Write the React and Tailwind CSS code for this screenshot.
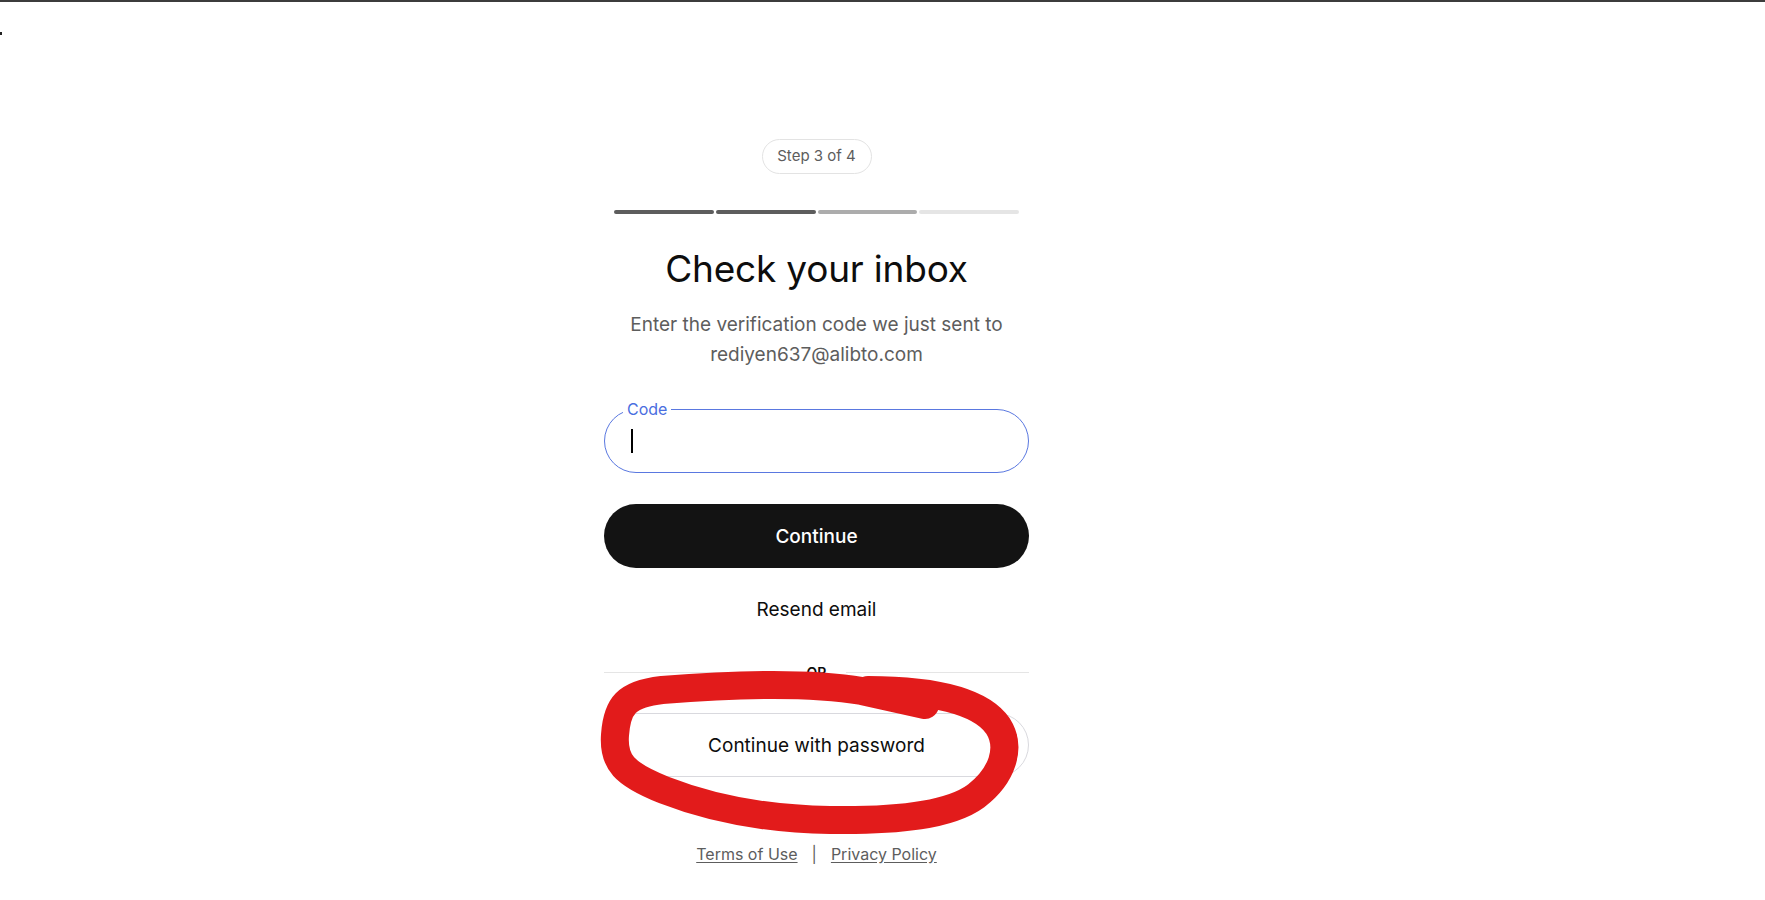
import React from "react";

const font = "font-['Inter','Noto_Sans',sans-serif]";

function StepPill() {
  return (
    <div className="flex justify-center">
      <div className="inline-flex h-[35px] w-[110px] items-center justify-center rounded-full border border-[#e3e3e3] text-[15px] text-[#5d5d5d]">
        Step 3 of 4
      </div>
    </div>
  );
}

function Progress() {
  return (
    <div className="mx-auto mt-[36px] flex h-[4px] w-[405px] gap-[2px]">
      <div className="flex-1 rounded-full bg-[#5d5d5d]" />
      <div className="flex-1 rounded-full bg-[#5d5d5d]" />
      <div className="flex-1 rounded-full bg-[#acacac]" />
      <div className="flex-1 rounded-full bg-[#e5e5e5]" />
    </div>
  );
}

function CodeField() {
  return (
    <div className="relative mt-[39px] flex h-[64px] items-center rounded-full border border-[#5a78e0] pl-[26px]">
      <span className="absolute left-[18px] top-[-11px] bg-white px-[4px] text-[16px] leading-[20px] text-[#4a6ee0]">
        Code
      </span>
      <span className="block h-[24px] w-[1.5px] bg-black" />
    </div>
  );
}

// hand-drawn red loop marked over the password button
function Scribble() {
  return (
    <svg
      className="pointer-events-none absolute left-0 top-0"
      width="1765"
      height="900"
      viewBox="0 0 1765 900"
      fill="none"
    >
      <path
        d="M 868 690 C 930 690, 980 700, 998 726 C 1012 748, 1002 776, 976 796 C 950 815, 900 821, 830 820 C 760 819, 705 806, 664 790 C 624 774, 613 762, 615 735 C 617 706, 626 694, 662 690 C 750 683, 820 684, 862 691 L 925 705"
        stroke="#e21b1b"
        strokeWidth="28"
        strokeLinecap="round"
        strokeLinejoin="round"
      />
    </svg>
  );
}

export default function App() {
  return (
    <div className={`relative min-h-[900px] w-full overflow-hidden bg-white ${font}`}>
      <div className="h-[2px] w-full bg-[#3c3c3c]" />
      <div className="mt-[30px] h-[3px] w-[2px] bg-[#222]" />

      <div className="w-[1633px]">
        <main className="mx-auto mt-[104px] flex w-[425px] flex-col">
          <StepPill />
          <Progress />

          <h1 className="mt-[31px] text-center text-[37px] font-normal leading-[48px] tracking-[-0.2px] text-[#0d0d0d]">
            Check your inbox
          </h1>
          <p className="mt-[17px] text-center text-[19px] leading-[30px] text-[#5d5d5d]">
            Enter the verification code we just sent to
            <br />
            rediyen637@alibto.com
          </p>

          <CodeField />

          <button className="mt-[31px] flex h-[64px] items-center justify-center rounded-full bg-[#131313] pt-[2px] text-[19px] font-medium text-white">
            Continue
          </button>

          <button className="mt-[21px] flex h-[40px] items-center justify-center pt-[2px] text-[19px] text-[#0d0d0d]">
            Resend email
          </button>

          <div className="mt-[33px] flex h-[21px] items-center">
            <div className="h-px flex-1 bg-[#e5e5e5]" />
            <span className="px-[20px] text-[14px] font-semibold leading-none text-[#0d0d0d]">OR</span>
            <div className="h-px flex-1 bg-[#e5e5e5]" />
          </div>

          <button className="mt-[30px] flex h-[64px] items-center justify-center rounded-full border border-[#d9d9de] bg-white pt-[2px] text-[19px] text-[#0d0d0d]">
            Continue with password
          </button>

          <footer className="mt-[65px] flex items-center justify-center text-[16px] leading-[24px] text-[#5d5d5d]">
            <a className="underline underline-offset-2">Terms of Use</a>
            <span className="mx-[14px]">|</span>
            <a className="underline underline-offset-2">Privacy Policy</a>
          </footer>
        </main>
      </div>

      <Scribble />
    </div>
  );
}
